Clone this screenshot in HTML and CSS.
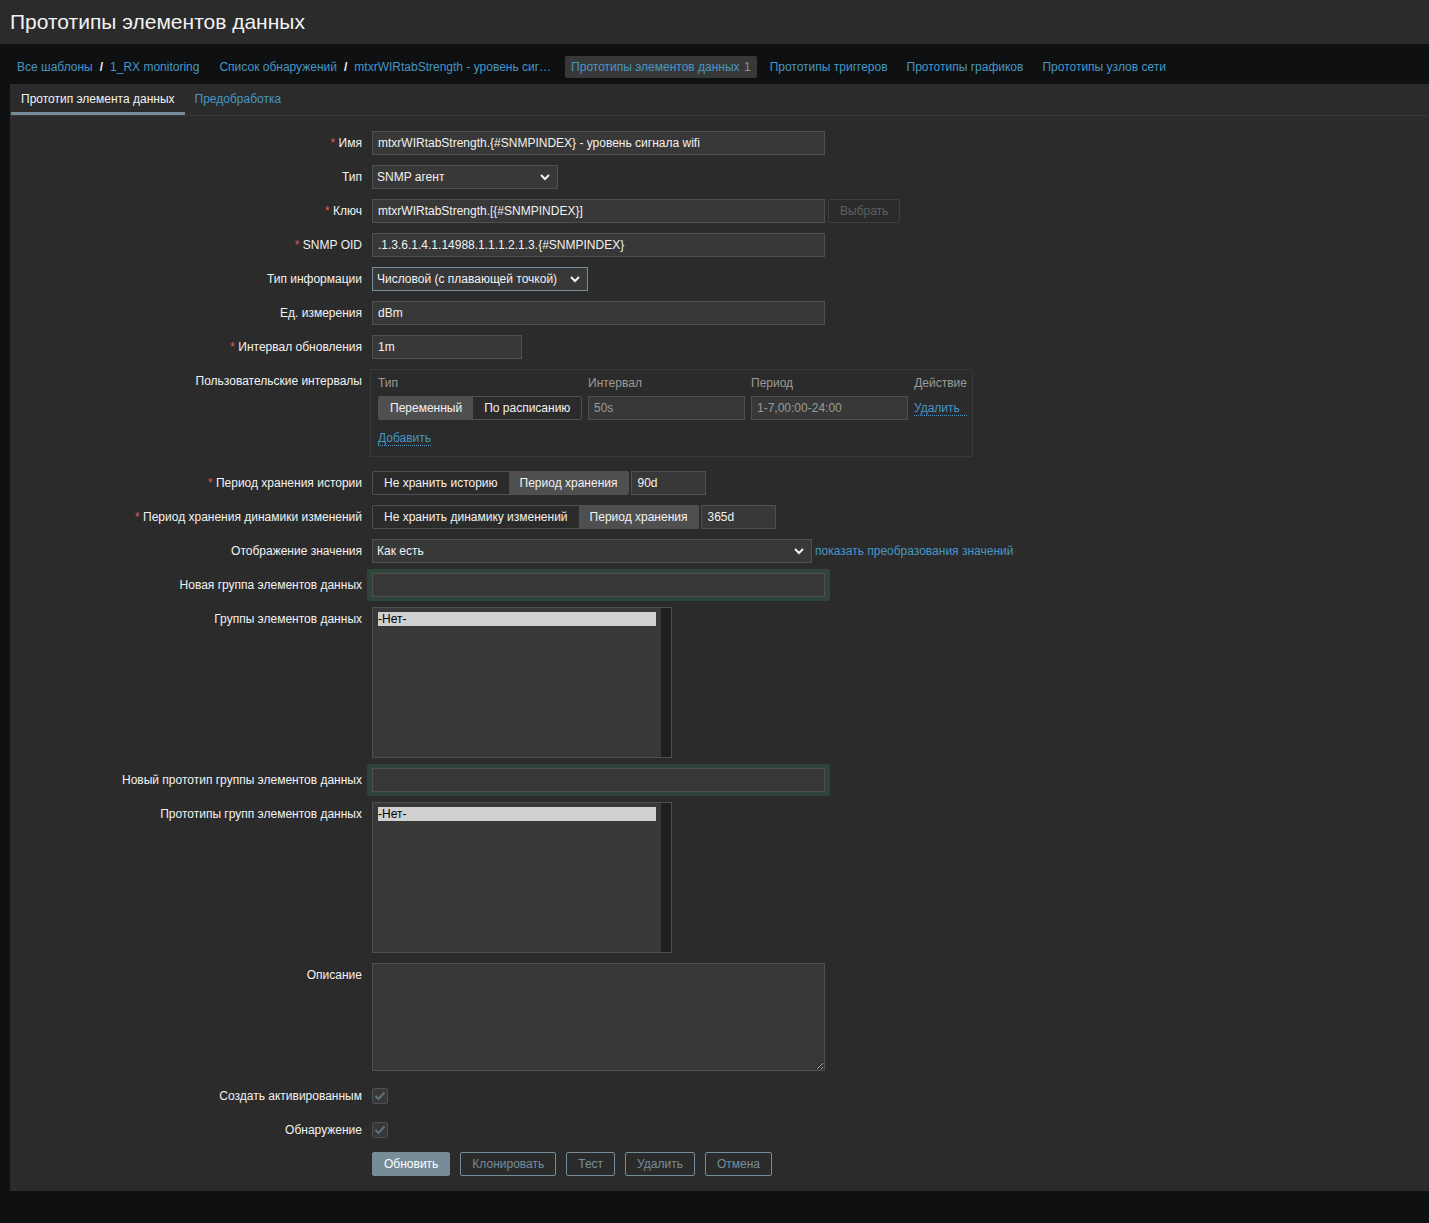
FILE: index.html
```html
<!DOCTYPE html>
<html>
  <head>
    <meta charset="utf-8">
    <title>Прототипы элементов данных</title>
    <link rel="stylesheet" href="styles.css">
  </head>
  <body>
    <header class="page_header">
      <h1>Прототипы элементов данных</h1>
    </header>

    <!-- навигация -->
    <nav class="subnav">
      <div class="crumbs">
        <a href="#">Все шаблоны</a><span class="sep">/</span><a href="#">1_RX monitoring</a>
      </div>
      <div class="crumbs">
        <a href="#">Список обнаружений</a><span class="sep">/</span><a href="#">mtxrWIRtabStrength - уровень сиг…</a>
      </div>
      <a class="nav_item active" href="#">Прототипы элементов данных <span class="count">1</span></a>
      <a class="nav_item" href="#">Прототипы триггеров</a>
      <a class="nav_item" href="#">Прототипы графиков</a>
      <a class="nav_item" href="#">Прототипы узлов сети</a>
    </nav>

    <main class="wrapper">
      <div class="tabs">
        <span class="tab active">Прототип элемента данных</span>
        <a class="tab" href="#">Предобработка</a>
      </div>

      <form class="form_grid">
        <label class="form_label"><span class="req">*</span> Имя</label>
        <div class="form_field">
          <input class="input w_wide" type="text" value="mtxrWIRtabStrength.{#SNMPINDEX} - уровень сигнала wifi">
        </div>

        <label class="form_label">Тип</label>
        <div class="form_field">
          <div class="select w_type"><span>SNMP агент</span><svg width="10" height="7" viewBox="0 0 10 7"><polyline points="1,1 5,5 9,1" fill="none" stroke="#f2f2f2" stroke-width="2"/></svg></div>
        </div>

        <label class="form_label"><span class="req">*</span> Ключ</label>
        <div class="form_field">
          <input class="input w_wide" type="text" value="mtxrWIRtabStrength.[{#SNMPINDEX}]">
          <button class="btn_disabled" type="button">Выбрать</button>
        </div>

        <label class="form_label"><span class="req">*</span> SNMP OID</label>
        <div class="form_field">
          <input class="input w_wide" type="text" value=".1.3.6.1.4.1.14988.1.1.1.2.1.3.{#SNMPINDEX}">
        </div>

        <label class="form_label">Тип информации</label>
        <div class="form_field">
          <div class="select select_focus w_info"><span>Числовой (с плавающей точкой)</span><svg width="10" height="7" viewBox="0 0 10 7"><polyline points="1,1 5,5 9,1" fill="none" stroke="#f2f2f2" stroke-width="2"/></svg></div>
        </div>

        <label class="form_label">Ед. измерения</label>
        <div class="form_field">
          <input class="input w_wide" type="text" value="dBm">
        </div>

        <label class="form_label"><span class="req">*</span> Интервал обновления</label>
        <div class="form_field">
          <input class="input w_small" type="text" value="1m">
        </div>

        <label class="form_label">Пользовательские интервалы</label>
        <div class="form_field">
          <div class="intervals">
            <span class="col_head">Тип</span>
            <span class="col_head">Интервал</span>
            <span class="col_head">Период</span>
            <span class="col_head">Действие</span>

            <div class="radio_group">
              <span class="radio active">Переменный</span>
              <span class="radio">По расписанию</span>
            </div>
            <input class="input input_muted" type="text" value="50s">
            <input class="input input_muted" type="text" value="1-7,00:00-24:00">
            <a class="link_dotted" href="#">Удалить</a>

            <div class="add_row"><a class="link_dotted" href="#">Добавить</a></div>
          </div>
        </div>

        <label class="form_label"><span class="req">*</span> Период хранения истории</label>
        <div class="form_field">
          <div class="radio_group">
            <span class="radio">Не хранить историю</span>
            <span class="radio active">Период хранения</span>
          </div>
          <input class="input w_period" type="text" value="90d">
        </div>

        <label class="form_label"><span class="req">*</span> Период хранения динамики изменений</label>
        <div class="form_field">
          <div class="radio_group">
            <span class="radio">Не хранить динамику изменений</span>
            <span class="radio active">Период хранения</span>
          </div>
          <input class="input w_period" type="text" value="365d">
        </div>

        <label class="form_label">Отображение значения</label>
        <div class="form_field">
          <div class="select w_map"><span>Как есть</span><svg width="10" height="7" viewBox="0 0 10 7"><polyline points="1,1 5,5 9,1" fill="none" stroke="#f2f2f2" stroke-width="2"/></svg></div>
          <a class="link_after" href="#">показать преобразования значений</a>
        </div>

        <label class="form_label">Новая группа элементов данных</label>
        <div class="form_field">
          <div class="new_wrap"><input class="input w_wide" type="text" value=""></div>
        </div>

        <label class="form_label">Группы элементов данных</label>
        <div class="form_field">
          <div class="listbox">
            <div class="list_area"><div class="option selected">-Нет-</div></div>
            <div class="scroll_track"></div>
          </div>
        </div>

        <label class="form_label">Новый прототип группы элементов данных</label>
        <div class="form_field">
          <div class="new_wrap"><input class="input w_wide" type="text" value=""></div>
        </div>

        <label class="form_label">Прототипы групп элементов данных</label>
        <div class="form_field">
          <div class="listbox">
            <div class="list_area"><div class="option selected">-Нет-</div></div>
            <div class="scroll_track"></div>
          </div>
        </div>

        <label class="form_label">Описание</label>
        <div class="form_field">
          <textarea class="textarea w_wide"></textarea>
        </div>

        <label class="form_label">Создать активированным</label>
        <div class="form_field">
          <span class="checkbox"><svg width="12" height="10" viewBox="0 0 12 10"><polyline points="1.5,5 4.5,8 10.5,1.5" fill="none" stroke="#5e717c" stroke-width="2"/></svg></span>
        </div>

        <label class="form_label">Обнаружение</label>
        <div class="form_field">
          <span class="checkbox"><svg width="12" height="10" viewBox="0 0 12 10"><polyline points="1.5,5 4.5,8 10.5,1.5" fill="none" stroke="#5e717c" stroke-width="2"/></svg></span>
        </div>

        <div class="form_label"></div>
        <div class="form_field buttons">
          <button class="btn btn_main" type="button">Обновить</button>
          <button class="btn" type="button">Клонировать</button>
          <button class="btn" type="button">Тест</button>
          <button class="btn" type="button">Удалить</button>
          <button class="btn" type="button">Отмена</button>
        </div>
      </form>
    </main>
  </body>
</html>
```

FILE: styles.css
```css
body {
  margin: 0;
  background: #0e1012;
  color: #f2f2f2;
  font-family: "Liberation Sans", Arial, sans-serif;
  font-size: 12px;
}

a {
  color: #4796c4;
  text-decoration: none;
}

/* Заголовок страницы */
.page_header {
  background: #2b2b2b;
  height: 44px;
}

.page_header h1 {
  margin: 0;
  padding: 0 10px;
  font-size: 21px;
  font-weight: normal;
  line-height: 44px;
  color: #f2f2f2;
}

/* Навигация */
.subnav {
  display: flex;
  align-items: center;
  gap: 7px;
  height: 40px;
  box-sizing: border-box;
  padding: 6px 0 0 11px;
}

.crumbs,
.nav_item {
  padding: 0 6px;
  line-height: 22px;
  white-space: nowrap;
}

.crumbs {
  margin-right: 1px;
}

.sep {
  color: #f2f2f2;
  font-weight: bold;
  padding: 0 7px;
}

.nav_item.active {
  background: #383838;
  border-radius: 2px;
}

.count {
  color: #8f8f8f;
  margin-left: 1px;
}

/* Контейнер */
.wrapper {
  margin-left: 10px;
  background: #2b2b2b;
  padding-bottom: 15px;
}

.tabs {
  display: flex;
  padding-left: 1px;
  border-bottom: 1px solid #383838;
}

.tab {
  height: 31px;
  line-height: 31px;
  padding: 0 10px;
  box-sizing: border-box;
  border-bottom: 3px solid transparent;
}

.tab.active {
  color: #f2f2f2;
  border-bottom-color: #768d99;
}

/* Форма */
.form_grid {
  display: grid;
  grid-template-columns: 352px 1fr;
  column-gap: 10px;
  row-gap: 10px;
  padding-top: 15px;
  margin: 0;
}

.form_label {
  text-align: right;
  line-height: 24px;
  white-space: nowrap;
}

.req {
  color: #e45959;
}

.form_field {
  display: flex;
  align-items: flex-start;
}

.input {
  height: 24px;
  box-sizing: border-box;
  background: #383838;
  border: 1px solid #4f4f4f;
  color: #f2f2f2;
  font-family: inherit;
  font-size: 12px;
  padding: 0 5px;
  margin: 0;
  outline: none;
}

.input_muted {
  color: #9a9a9a;
  width: 157px;
}

.w_wide { width: 453px; }
.w_small { width: 150px; }
.w_type { width: 186px; }
.w_info { width: 216px; }
.w_map { width: 440px; }
.w_period { width: 75px; margin-left: 2px; }

.select {
  height: 24px;
  box-sizing: border-box;
  display: flex;
  align-items: center;
  justify-content: space-between;
  background: #383838;
  border: 1px solid #4f4f4f;
  padding: 0 7px 0 4px;
  white-space: nowrap;
}

.select_focus {
  border-color: #768d99;
}

.btn_disabled {
  height: 24px;
  margin-left: 3px;
  padding: 0 11px;
  background: transparent;
  border: 1px solid #3f3f3f;
  border-radius: 2px;
  color: #5f5f5f;
  font-family: inherit;
  font-size: 12px;
}

.link_after {
  margin-left: 3px;
  line-height: 24px;
}

/* Пользовательские интервалы */
.intervals {
  display: grid;
  grid-template-columns: 204px 157px 157px auto;
  column-gap: 6px;
  row-gap: 6px;
  align-items: center;
  width: 603px;
  box-sizing: border-box;
  margin: 0 0 4px -2px;
  padding: 6px 5px 11px 7px;
  border: 1px solid #383838;
}

.col_head {
  color: #9a9a9a;
  line-height: 14px;
}

.intervals .col_head:last-of-type {
  text-align: right;
}

.add_row {
  grid-column: 1 / -1;
  margin-top: 5px;
  line-height: 14px;
}

.link_dotted {
  border-bottom: 1px dotted #4796c4;
}

.radio_group {
  display: inline-flex;
  height: 24px;
  box-sizing: border-box;
  border: 1px solid #4f4f4f;
  border-radius: 2px;
  overflow: hidden;
}

.radio {
  padding: 0 11px;
  line-height: 22px;
  white-space: nowrap;
}

.radio.active {
  background: #4f4f4f;
}

/* Новая группа */
.new_wrap {
  display: flex;
  padding: 4px 5px;
  margin: -4px -5px;
  background: #2e4438;
  border-radius: 2px;
}

/* Списки */
.listbox {
  display: flex;
  width: 300px;
  height: 151px;
  box-sizing: border-box;
  background: #383838;
  border: 1px solid #4f4f4f;
}

.list_area {
  flex: 1;
  padding: 4px 5px 0 5px;
}

.option {
  line-height: 14px;
}

.option.selected {
  background: #d0d0d0;
  color: #000;
}

.scroll_track {
  width: 10px;
  background: #1f1f1f;
}

.textarea {
  height: 108px;
  box-sizing: border-box;
  background: #383838;
  border: 1px solid #4f4f4f;
  margin: 0 0 3px 0;
  resize: vertical;
}

.checkbox {
  display: flex;
  align-items: center;
  justify-content: center;
  width: 16px;
  height: 16px;
  box-sizing: border-box;
  margin-top: 4px;
  background: #383838;
  border: 1px solid #4f4f4f;
  border-radius: 2px;
}

/* Кнопки */
.buttons {
  gap: 10px;
}

.btn {
  height: 24px;
  padding: 0 11px;
  background: transparent;
  border: 1px solid #768d99;
  border-radius: 2px;
  color: #768d99;
  font-family: inherit;
  font-size: 12px;
  cursor: pointer;
}

.btn_main {
  background: #768d99;
  color: #fff;
}
```
